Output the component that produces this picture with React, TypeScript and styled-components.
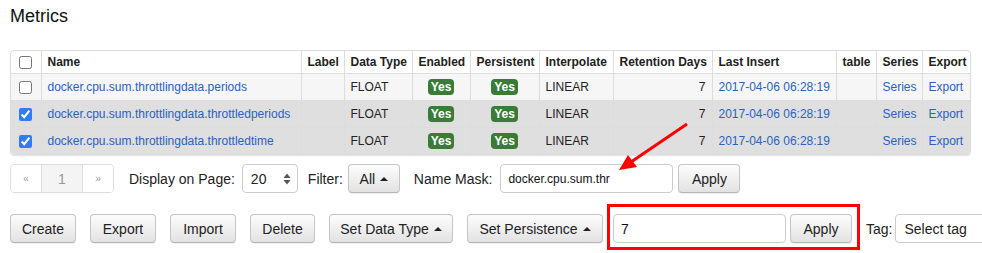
import React from 'react';
import styled, { createGlobalStyle, css } from 'styled-components';

const GlobalStyle = createGlobalStyle`
  html, body {
    margin: 0;
    padding: 0;
    overflow: hidden;
    background: #fff;
  }
  body {
    font-family: "Liberation Sans", Arial, Helvetica, sans-serif;
    color: #333;
  }
`;

const Page = styled.div`
  position: relative;
  width: 982px;
  height: 253px;
  padding: 6px 10px 0;
  box-sizing: border-box;
`;

const Title = styled.h1`
  margin: 0 0 24px;
  font-size: 18px;
  line-height: 20px;
  font-weight: normal;
  color: #111;
`;

const TableWrap = styled.div`
  width: 961px;
  box-sizing: border-box;
  border: 1px solid #ddd;
  border-radius: 4px;
  overflow: hidden;
  box-shadow: 0 1px 1px rgba(0, 0, 0, 0.12);
`;

const Table = styled.table`
  width: 100%;
  border-collapse: collapse;
  table-layout: fixed;
  font-size: 12px;
`;

const Col = styled.col<{ $w: number }>`
  width: ${(p) => p.$w}px;
`;

type Align = 'left' | 'center' | 'right';

const cellBase = css<{ $align?: Align }>`
  padding: 0 6px;
  text-align: ${(p) => p.$align || 'left'};
  border-left: 1px solid #ddd;
  white-space: nowrap;
  overflow: hidden;
  &:first-child {
    border-left: none;
  }
`;

const Th = styled.th<{ $align?: Align }>`
  ${cellBase};
  height: 22px;
  font-weight: bold;
  color: #222;
`;

const Tr = styled.tr<{ $selected?: boolean }>`
  background: ${(p) => (p.$selected ? '#dfdfdf' : '#f6f6f6')};
  border-top: 1px solid #ddd;
`;

const Td = styled.td<{ $align?: Align }>`
  ${cellBase};
  height: 26px;
  color: #222;
`;

const Link = styled.a`
  color: #2a62bf;
  text-decoration: none;
`;

const Check = styled.input`
  margin: 0;
  width: 13px;
  height: 13px;
  vertical-align: middle;
  accent-color: #2f7cf6;
`;

const Badge = styled.span`
  display: inline-block;
  padding: 2px 3px;
  border-radius: 4px;
  background: #3a7b38;
  color: #fff;
  font-weight: bold;
  font-size: 12px;
  line-height: 12px;
`;

const Toolbar = styled.div<{ $top: number }>`
  display: flex;
  align-items: center;
  margin-top: ${(p) => p.$top}px;
  height: 29px;
  font-size: 14px;
`;

const Pager = styled.div`
  display: inline-flex;
  height: 29px;
  box-sizing: border-box;
  border: 1px solid #ddd;
  border-radius: 4px;
  overflow: hidden;
`;

const PageCell = styled.span<{ $w: number; $active?: boolean }>`
  display: flex;
  align-items: center;
  justify-content: center;
  width: ${(p) => p.$w}px;
  background: ${(p) => (p.$active ? '#f4f4f4' : '#fff')};
  color: #999;
  font-size: ${(p) => (p.$active ? '14px' : '10px')};
  & + & {
    border-left: 1px solid #ddd;
  }
`;

const Label = styled.span<{ $ml: number; $mr: number }>`
  margin-left: ${(p) => p.$ml}px;
  margin-right: ${(p) => p.$mr}px;
  color: #222;
  white-space: nowrap;
`;

const SelectBox = styled.div<{ $w: number }>`
  display: flex;
  align-items: center;
  justify-content: space-between;
  flex-shrink: 0;
  width: ${(p) => p.$w}px;
  height: 29px;
  box-sizing: border-box;
  padding: 0 6px 0 8px;
  border: 1px solid #ccc;
  border-radius: 4px;
  background: #fff;
  color: #222;
  font-size: 14px;
`;

const Input = styled.div<{ $w: number; $fs: number }>`
  display: flex;
  align-items: center;
  flex-shrink: 0;
  width: ${(p) => p.$w}px;
  height: 29px;
  box-sizing: border-box;
  padding: 0 7px;
  border: 1px solid #ccc;
  border-radius: 4px;
  background: #fff;
  color: #111;
  font-size: ${(p) => p.$fs}px;
`;

const Button = styled.button<{ $w: number; $ml?: number }>`
  display: inline-flex;
  align-items: center;
  justify-content: center;
  gap: 5px;
  flex-shrink: 0;
  width: ${(p) => p.$w}px;
  height: 29px;
  margin: 0 0 0 ${(p) => p.$ml ?? 0}px;
  padding: 0;
  border: 1px solid #c6c6c6;
  border-bottom-color: #b5b5b5;
  border-radius: 4px;
  background: linear-gradient(#fdfdfd, #e2e2e2);
  box-shadow: 0 1px 1px rgba(0, 0, 0, 0.06);
  color: #222;
  font-family: inherit;
  font-size: 14px;
`;

const Caret = styled.span`
  width: 0;
  height: 0;
  border-left: 4px solid transparent;
  border-right: 4px solid transparent;
  border-bottom: 4px solid #222;
`;

const Highlight = styled.div`
  position: relative;
  display: flex;
  align-items: center;
  gap: 4px;
  margin-left: 10px;
  &::after {
    content: '';
    position: absolute;
    left: -6px;
    right: -8px;
    top: -10px;
    bottom: -7px;
    border: 3px solid #f00;
    pointer-events: none;
  }
`;

const Overlay = styled.svg`
  position: absolute;
  left: 0;
  top: 0;
  pointer-events: none;
`;

const columns: { title: string; w: number; align?: Align }[] = [
  { title: '', w: 30, align: 'center' },
  { title: 'Name', w: 260 },
  { title: 'Label', w: 43 },
  { title: 'Data Type', w: 68 },
  { title: 'Enabled', w: 58 },
  { title: 'Persistent', w: 69 },
  { title: 'Interpolate', w: 74 },
  { title: 'Retention Days', w: 99 },
  { title: 'Last Insert', w: 124 },
  { title: 'table', w: 40 },
  { title: 'Series', w: 46 },
  { title: 'Export', w: 48 },
];

const metrics = [
  { name: 'docker.cpu.sum.throttlingdata.periods', selected: false },
  { name: 'docker.cpu.sum.throttlingdata.throttledperiods', selected: true },
  { name: 'docker.cpu.sum.throttlingdata.throttledtime', selected: true },
];

const UpDown = () => (
  <svg width="8" height="12" viewBox="0 0 8 12">
    <path d="M4 0.5 L7.5 5 H0.5 Z" fill="#555" />
    <path d="M4 11.5 L7.5 7 H0.5 Z" fill="#555" />
  </svg>
);

const App = () => (
  <Page>
    <GlobalStyle />
    <Title>Metrics</Title>

    <TableWrap>
      <Table>
        <colgroup>
          {columns.map((c, i) => (
            <Col key={i} $w={c.w} />
          ))}
        </colgroup>
        <thead>
          <tr>
            <Th $align="center">
              <Check type="checkbox" readOnly />
            </Th>
            {columns.slice(1).map((c) => (
              <Th key={c.title}>{c.title}</Th>
            ))}
          </tr>
        </thead>
        <tbody>
          {metrics.map((m) => (
            <Tr key={m.name} $selected={m.selected}>
              <Td $align="center">
                <Check type="checkbox" checked={m.selected} readOnly />
              </Td>
              <Td>
                <Link href="#">{m.name}</Link>
              </Td>
              <Td />
              <Td>FLOAT</Td>
              <Td $align="center">
                <Badge>Yes</Badge>
              </Td>
              <Td $align="center">
                <Badge>Yes</Badge>
              </Td>
              <Td>LINEAR</Td>
              <Td $align="right">7</Td>
              <Td>
                <Link href="#">2017-04-06 06:28:19</Link>
              </Td>
              <Td />
              <Td>
                <Link href="#">Series</Link>
              </Td>
              <Td>
                <Link href="#">Export</Link>
              </Td>
            </Tr>
          ))}
        </tbody>
      </Table>
    </TableWrap>

    <Toolbar $top={9}>
      <Pager>
        <PageCell $w={30}>«</PageCell>
        <PageCell $w={40} $active>
          1
        </PageCell>
        <PageCell $w={30}>»</PageCell>
      </Pager>
      <Label $ml={15} $mr={7}>
        Display on Page:
      </Label>
      <SelectBox $w={56}>
        20
        <UpDown />
      </SelectBox>
      <Label $ml={10} $mr={5}>
        Filter:
      </Label>
      <Button $w={52}>
        All
        <Caret />
      </Button>
      <Label $ml={14} $mr={8}>
        Name Mask:
      </Label>
      <Input $w={173} $fs={12}>
        docker.cpu.sum.thr
      </Input>
      <Button $w={62} $ml={5}>
        Apply
      </Button>
    </Toolbar>

    <Toolbar $top={21}>
      <Button $w={66}>Create</Button>
      <Button $w={66} $ml={14}>
        Export
      </Button>
      <Button $w={66} $ml={14}>
        Import
      </Button>
      <Button $w={65} $ml={14}>
        Delete
      </Button>
      <Button $w={124} $ml={14}>
        Set Data Type
        <Caret />
      </Button>
      <Button $w={136} $ml={14}>
        Set Persistence
        <Caret />
      </Button>
      <Highlight>
        <Input $w={173} $fs={14}>
          7
        </Input>
        <Button $w={62}>Apply</Button>
      </Highlight>
      <Label $ml={14} $mr={3}>
        Tag:
      </Label>
      <SelectBox $w={100}>Select tag</SelectBox>
    </Toolbar>

    <Overlay width="982" height="253">
      <line x1="687" y1="124" x2="631" y2="162" stroke="#f00" strokeWidth="3" />
      <polygon points="619,170 628,155 637,167" fill="#f00" />
    </Overlay>
  </Page>
);

export default App;
